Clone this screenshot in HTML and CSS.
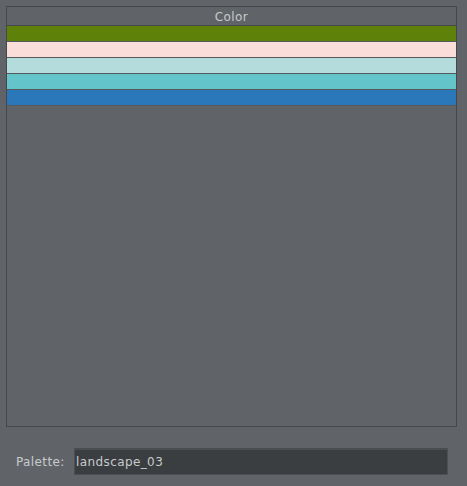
FILE: index.html
```html
<!DOCTYPE html>
<html>
<head>
<meta charset="utf-8">
<link rel="stylesheet" href="styles.css">
</head>
<body>
<div class="app">
  <div class="table">
    <div class="header">Color</div>
    <div class="row" style="background:#5e8209"></div>
    <div class="row" style="background:#fadcd9"></div>
    <div class="row" style="background:#b5dcdc"></div>
    <div class="row" style="background:#63c5ca"></div>
    <div class="row" style="background:#2a78b9"></div>
  </div>
  <div class="footer">
    <span class="label">Palette:</span>
    <div class="input">landscape_03</div>
  </div>
</div>
</body>
</html>
```
FILE: styles.css
```css
html, body {
  margin: 0;
  padding: 0;
  background: #606468;
}
.app {
  width: 467px;
  height: 486px;
  padding: 6px 10px 0 6px;
  box-sizing: border-box;
  font-family: "DejaVu Sans", sans-serif;
  font-size: 12px;
  letter-spacing: 0.4px;
  color: #c8cacc;
}
.table {
  height: 421px;
  border: 1px solid #45484b;
  box-sizing: border-box;
  display: flex;
  flex-direction: column;
}
.header {
  height: 18px;
  line-height: 20px;
  text-align: center;
  border-bottom: 1px solid #45484b;
  flex: none;
}
.row {
  height: 15px;
  border-bottom: 1px solid #55595c;
  flex: none;
}
.footer {
  display: flex;
  align-items: center;
  margin-top: 21px;
  padding-left: 10px;
  padding-right: 9px;
}
.label {
  width: 58px;
  flex: none;
}
.input {
  flex: 1;
  height: 27px;
  box-sizing: border-box;
  background: #3a3e41;
  border: 1px solid #4c5053;
  border-top: 2px solid #4a4d50;
  line-height: 24px;
  padding-left: 1px;
  color: #c8cacc;
}
```
